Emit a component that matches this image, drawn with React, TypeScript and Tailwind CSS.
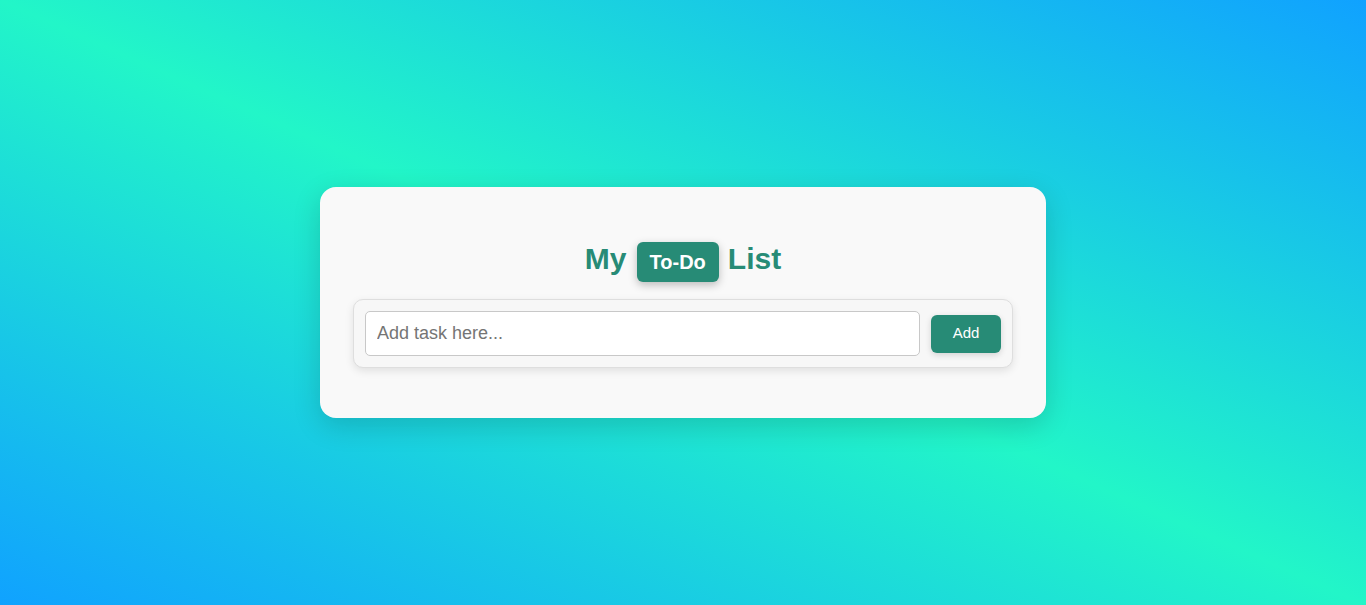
import React, { useState } from "react";

export default function App() {
  const [task, setTask] = useState("");

  return (
    <div className="flex min-h-screen items-center justify-center bg-[linear-gradient(to_top_right,#10a2ff_0%,#22f6c8_50%,#10a2ff_100%)] font-['Liberation_Sans',Arial,sans-serif]">
      <div className="w-[726px] rounded-2xl bg-[#f9f9f9] px-[33px] pt-[49px] pb-[50px] shadow-[0_8px_28px_rgba(0,0,0,0.16)]">
        <h1 className="flex items-baseline justify-center gap-[10px] text-[30px] font-bold text-[#278b76]">
          <span>My</span>
          <span className="rounded-md bg-[#278b76] px-[13px] py-2 text-[20px] leading-6 text-white shadow-[0_3px_8px_rgba(0,0,0,0.25)]">
            To-Do
          </span>
          <span className="-ml-px">List</span>
        </h1>
        <div className="mt-[17px] flex items-center gap-[11px] rounded-[10px] border border-[#dedede] bg-[#f7f7f7] p-[11px] shadow-[0_3px_8px_rgba(0,0,0,0.1)]">
          <input
            type="text"
            value={task}
            onChange={(e) => setTask(e.target.value)}
            placeholder="Add task here..."
            className="h-[45px] flex-1 rounded-[5px] border border-[#c8c8c8] bg-white px-[11px] text-[18px] text-[#333] outline-none placeholder:text-[#757575]"
          />
          <button className="h-[38px] w-[70px] rounded-md bg-[#278b76] text-[15px] text-white shadow-[0_2px_6px_rgba(0,0,0,0.15)]">
            Add
          </button>
        </div>
      </div>
    </div>
  );
}
